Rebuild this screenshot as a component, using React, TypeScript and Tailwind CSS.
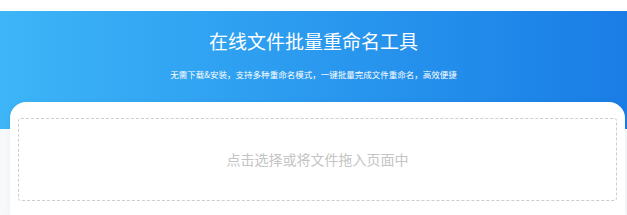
import React from 'react';

export default function App() {
  return (
    <div
      className="min-h-[215px] w-full bg-[#f7f8fa]"
      style={{ fontFamily: '"Noto Sans CJK SC", "Noto Sans", sans-serif' }}
    >
      {/* 顶部留白 */}
      <div className="h-[11px] bg-white" />

      {/* Banner */}
      <div className="h-[118px] bg-gradient-to-r from-[#3db5f7] to-[#1a7de6] pt-[19px] text-center text-white">
        <h1 className="text-[19px] leading-[22px] font-normal">在线文件批量重命名工具</h1>
        <p className="mt-[17px] text-[8.5px] leading-[10px]">
          无需下载&amp;安装，支持多种重命名模式，一键批量完成文件重命名，高效便捷
        </p>
      </div>

      {/* 上传区域 */}
      <div className="mt-[-27px] ml-[10px] mr-[2px] rounded-t-2xl bg-white px-[8px] pt-[16px] pb-[14px] shadow-[0_0_6px_rgba(0,0,0,0.04)]">
        <div className="flex h-[83px] items-center justify-center rounded-[3px] border border-dashed border-[#cdcdcd]">
          <span className="text-[14px] text-[#c4c4c4]">点击选择或将文件拖入页面中</span>
        </div>
      </div>
    </div>
  );
}
